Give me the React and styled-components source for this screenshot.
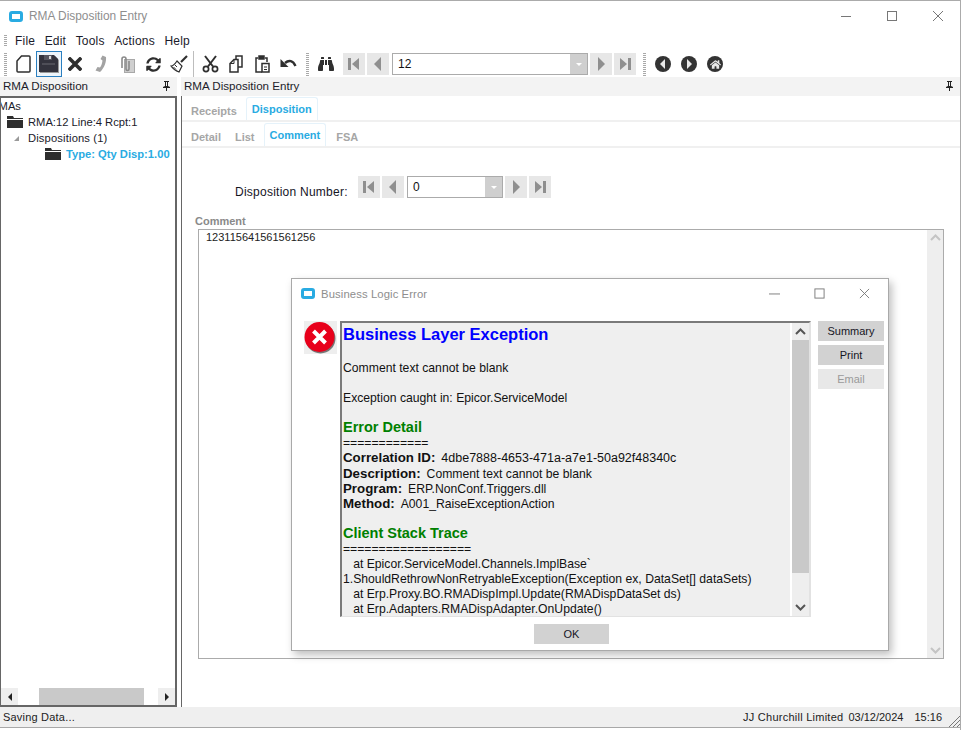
import React from 'react';
import styled, { createGlobalStyle } from 'styled-components';
import { FaBinoculars, FaHome, FaSyncAlt } from 'react-icons/fa';

const GlobalStyle = createGlobalStyle`
  html, body { margin: 0; padding: 0; background: #fff; }
  body { font-family: "Liberation Sans", Arial, sans-serif; font-size: 12px; color: #111; }
`;

const blue = '#29abe2';

const Window = styled.div`
  position: relative;
  width: 961px;
  height: 730px;
  box-sizing: border-box;
  border-top: 1px solid #ababab;
  border-right: 1px solid #ababab;
  overflow: hidden;
  display: flex;
  flex-direction: column;
  background: #fff;
`;

// bits of the desktop showing through at the very edge of the window
const EdgeStrip = styled.span`
  position: absolute;
  right: -1px;
  top: ${p => p.$top}px;
  width: 1px;
  height: ${p => p.$h}px;
  background: ${p => p.$color};
`;

const TitleBar = styled.div`
  height: 30px;
  flex: none;
  display: flex;
  align-items: center;
  padding-left: 9px;
  color: #8e8e8e;
  font-size: 11.9px;
`;

const AppIcon = styled.span`
  width: 14px;
  height: 11px;
  box-sizing: border-box;
  border-radius: 3px;
  background: #fff;
  border: 3px solid ${blue};
  margin-right: 6px;
  flex: none;
`;

const TitleText = styled.span`
  flex: 1;
`;

const WinButtons = styled.div`
  display: flex;
  align-items: center;
  color: #777;
`;

const WinButton = styled.svg`
  display: block;
  width: ${p => p.$size || 12}px;
  height: ${p => p.$size || 12}px;
  margin-left: ${p => p.$gap || 0}px;
  margin-right: ${p => p.$right || 0}px;
  fill: none;
  stroke: #777;
  stroke-width: 1;
`;

const MenuBar = styled.div`
  height: 20px;
  flex: none;
  display: flex;
  align-items: center;
  padding-left: 4px;
`;

const Grip = styled.span`
  width: 3px;
  height: ${p => p.$h || 23}px;
  flex: none;
  margin-left: ${p => p.$gap || 0}px;
  background: repeating-linear-gradient(to bottom, #a9a9a9 0 1px, #fff 1px 2px);
`;

const MenuItem = styled.span`
  margin-left: ${p => p.$gap || 9.5}px;
  font-size: 12px;
  letter-spacing: 0.2px;
  color: #1b1b2b;
`;

const ToolBar = styled.div`
  height: 26px;
  flex: none;
  display: flex;
  align-items: center;
  padding-left: 4px;
`;

const ToolSlot = styled.span`
  width: 26px;
  height: 26px;
  box-sizing: border-box;
  flex: none;
  display: flex;
  align-items: center;
  justify-content: center;
  color: #2f2f2f;
  margin-left: ${p => p.$gap || 0}px;
  border: ${p => (p.$active ? `1px solid #2a7fc0` : 'none')};
  background: ${p => (p.$active ? '#eef5fb' : 'transparent')};
`;

const Divider = styled.span`
  width: 1px;
  height: 26px;
  background: #bdbdbd;
  flex: none;
  margin: 0 0 0 1px;
`;

const NavButton = styled.span`
  width: 22px;
  height: 22px;
  flex: none;
  background: #e7e7e7;
  display: flex;
  align-items: center;
  justify-content: center;
  margin-left: ${p => p.$gap ?? 2}px;
`;

const NavGlyph = styled.svg`
  width: 14px;
  height: 14px;
  fill: #8f8f8f;
  display: block;
`;

const Combo = styled.div`
  width: ${p => p.$w}px;
  height: 22px;
  flex: none;
  box-sizing: border-box;
  border: 1px solid #ababab;
  margin: 0 0 0 3px;
  display: flex;
  background: #fff;
`;

const ComboValue = styled.span`
  flex: 1;
  padding-left: 5px;
  line-height: 21px;
  color: #111;
  font-size: 12px;
`;

const ComboDrop = styled.span`
  width: 17px;
  background: #cfcfcf;
  display: flex;
  align-items: center;
  justify-content: center;
  &::after {
    content: '';
    border-left: 3px solid transparent;
    border-right: 3px solid transparent;
    border-top: 3px solid #fff;
  }
`;

const RoundButton = styled.span`
  width: 16px;
  height: 16px;
  flex: none;
  border-radius: 50%;
  background: #333;
  display: flex;
  align-items: center;
  justify-content: center;
  margin-left: ${p => p.$gap || 10}px;
  color: #e8e8e8;
`;

const Body = styled.div`
  flex: 1;
  min-height: 0;
  display: flex;
  background: #fff;
`;

const LeftPanel = styled.div`
  width: 177px;
  flex: none;
  display: flex;
  flex-direction: column;
  margin-right: 4px;
`;

const PanelHeader = styled.div`
  height: 19px;
  flex: none;
  box-sizing: border-box;
  background: #f3f3f3;
  display: flex;
  align-items: center;
  justify-content: space-between;
  padding: 0 6px 2px 3px;
  font-size: 11.6px;
  color: #1c1c2a;
`;

const Pin = styled.svg`
  width: 9px;
  height: 10px;
  display: block;
  fill: #222;
`;

const TreeBox = styled.div`
  flex: 1;
  min-height: 0;
  box-sizing: border-box;
  border: 2px solid #666;
  border-left-width: 1px;
  display: flex;
  flex-direction: column;
  overflow: hidden;
`;

const Tree = styled.div`
  flex: 1;
`;

const TreeRow = styled.div`
  height: 16px;
  display: flex;
  align-items: center;
  padding-left: ${p => p.$indent}px;
  color: ${p => (p.$selected ? blue : '#1a1a2a')};
  font-weight: ${p => (p.$selected ? 700 : 400)};
  font-size: 11.2px;
  letter-spacing: ${p => p.$spacing || 0}px;
  white-space: nowrap;
`;

// the tree is scrolled a little to the right, so its root label runs under the edge
const RootLabel = styled.span`
  margin-left: -10.5px;
`;

const Folder = styled.svg`
  width: 16px;
  height: 12px;
  margin-right: 5px;
  fill: #2e2e2e;
  flex: none;
`;

const Expander = styled.span`
  width: 0;
  height: 0;
  margin-right: 9px;
  margin-left: -14px;
  border-left: 5px solid transparent;
  border-bottom: 5px solid #9a9a9a;
`;

const HScroll = styled.div`
  height: 17px;
  flex: none;
  display: flex;
  align-items: center;
`;

const ScrollEnd = styled.span`
  width: 17px;
  height: 17px;
  background: #eee;
  display: flex;
  align-items: center;
  justify-content: center;
`;

const ScrollArrow = styled.span`
  width: 0;
  height: 0;
  border-top: 4px solid transparent;
  border-bottom: 4px solid transparent;
  ${p => (p.$right ? 'border-left: 4px solid #222;' : 'border-right: 4px solid #222;')}
`;

const ScrollThumb = styled.span`
  width: 105px;
  height: 17px;
  background: #c9c9c9;
  margin: 0 auto 0 21px;
`;

const RightPanel = styled.div`
  flex: 1;
  min-width: 0;
  display: flex;
  flex-direction: column;
`;

const RightBox = styled.div`
  flex: 1;
  min-height: 0;
  border-left: 1px solid #666;
  display: flex;
  flex-direction: column;
`;

const TabRow = styled.div`
  height: 24px;
  flex: none;
  display: flex;
  align-items: flex-end;
  border-bottom: 2px solid #f0f0f0;
  padding-left: ${p => p.$left || 0}px;
`;

const Tab = styled.span`
  height: ${p => (p.$active ? 23 : 20)}px;
  box-sizing: border-box;
  display: flex;
  align-items: ${p => (p.$active ? 'flex-start' : 'center')};
  padding: ${p => (p.$active ? '5px 5px 0' : '2px 0 0')};
  margin-left: ${p => p.$gap || 0}px;
  font-weight: 700;
  font-size: 11px;
  color: ${p => (p.$active ? blue : '#a6a6a6')};
  border: ${p => (p.$active ? '1px solid #e5f2fa' : 'none')};
  border-bottom: none;
  border-radius: 3px 3px 0 0;
`;

const Form = styled.div`
  flex: 1;
  min-height: 0;
  display: flex;
  flex-direction: column;
  padding: 28px 0 48px 13px;
`;

const NumberRow = styled.div`
  height: 22px;
  flex: none;
  display: flex;
  align-items: center;
  padding-left: 40px;
`;

const NumberLabel = styled.span`
  width: 121px;
  padding-top: 9px;
  font-size: 12px;
  color: #15151f;
  letter-spacing: 0.25px;
`;

const CommentLabel = styled.div`
  margin-top: 16px;
  height: 15px;
  line-height: 15px;
  font-weight: 700;
  font-size: 11px;
  color: #8a8a8a;
`;

const CommentBox = styled.div`
  flex: 1;
  min-height: 0;
  margin: 0 16px 0 3px;
  box-sizing: border-box;
  border: 1px solid #ababab;
  display: flex;
`;

const CommentText = styled.div`
  flex: 1;
  padding: 1px 7px;
  font-size: 11px;
  line-height: 13px;
  color: #222;
`;

const VScroll = styled.div`
  width: 16px;
  flex: none;
  background: #eee;
  display: flex;
  flex-direction: column;
  align-items: center;
  justify-content: space-between;
  padding: 3px 0;
  box-sizing: border-box;
`;

const Chevron = styled.svg`
  width: 11px;
  height: 9px;
  fill: none;
  stroke: ${p => p.$color || '#c4c4c4'};
  stroke-width: 2;
  display: block;
`;

const StatusBar = styled.div`
  height: 20px;
  flex: none;
  box-sizing: border-box;
  background: #efefef;
  display: flex;
  align-items: center;
  padding: 0 18px 0 3px;
  font-size: 11px;
  color: #222;
  position: relative;
  margin-bottom: 3px;
  box-shadow: 0 1px 0 #a8a8a8;
`;

const StatusText = styled.span`
  margin-left: ${p => p.$gap || 0}px;
  letter-spacing: ${p => p.$spacing || 0}px;
`;

const StatusLead = styled.span`
  margin-right: auto;
  letter-spacing: 0.2px;
`;

const ResizeGrip = styled.svg`
  position: absolute;
  right: 0;
  bottom: 0;
  width: 11px;
  height: 11px;
  stroke: #777;
  stroke-width: 1;
`;

const Dialog = styled.div`
  position: absolute;
  left: 291px;
  top: 277px;
  width: 598px;
  height: 373px;
  box-sizing: border-box;
  background: #fff;
  border: 1px solid #a9a9a9;
  box-shadow: 3px 4px 8px rgba(0, 0, 0, 0.25);
  display: flex;
  flex-direction: column;
`;

const DialogTitle = styled(TitleBar)`
  height: 29px;
  font-size: 11.3px;
  padding-left: 9px;
  margin-bottom: 2px;
  letter-spacing: 0.1px;
`;

const DialogBody = styled.div`
  height: 296px;
  margin-top: 11px;
  flex: none;
  display: flex;
  padding-left: 12px;
`;

const ErrorIcon = styled.svg`
  width: 33px;
  height: 33px;
  flex: none;
  margin-right: 3px;
`;

const MessagePane = styled.div`
  width: 471px;
  flex: none;
  box-sizing: border-box;
  display: flex;
  background: #efefef;
  border-top: 2px solid #7a7a7a;
  border-left: 2px solid #7a7a7a;
  border-bottom: 1px solid #e2e2e2;
  border-right: 2px solid #e2e2e2;
  overflow: hidden;
`;

const Message = styled.div`
  flex: 1;
  min-width: 0;
  padding: 0 0 0 1px;
  font-size: 12.2px;
  line-height: 15.3px;
  color: #111;
  overflow: hidden;
`;

const Heading = styled.div`
  font-size: 16.5px;
  line-height: 22px;
  font-weight: 700;
  color: #0000ff;
`;

const SubHeading = styled.div`
  font-size: 14.5px;
  line-height: 18px;
  font-weight: 700;
  color: #008000;
  margin-top: ${p => p.$top}px;
`;

const Para = styled.div`
  margin-top: ${p => p.$top || 0}px;
  white-space: nowrap;
`;

const Label = styled.b`
  font-size: 13.3px;
  line-height: 1;
  margin-right: 6px;
`;

const HexValue = styled.span`
  font-size: 12.5px;
  line-height: 1;
`;

const StackTrace = styled.div`
  line-height: 15px;
`;

const PaneScroll = styled.div`
  width: 17px;
  flex: none;
  border-left: 2px solid #fff;
  display: flex;
  flex-direction: column;
  background: #eee;
`;

const PaneArrow = styled.div`
  height: 17px;
  flex: none;
  display: flex;
  align-items: center;
  justify-content: center;
`;

const PaneThumb = styled.div`
  height: 233px;
  flex: none;
  background: #c9c9c9;
`;

const PaneRest = styled.div`
  flex: 1;
`;

const SideButtons = styled.div`
  display: flex;
  flex-direction: column;
  gap: 4px;
  margin-left: 7px;
`;

const Button = styled.span`
  width: ${p => p.$w || 66}px;
  height: 20px;
  display: flex;
  align-items: center;
  justify-content: center;
  font-size: 11px;
  background: ${p => (p.$disabled ? '#e8e8e8' : '#d2d2d2')};
  color: ${p => (p.$disabled ? '#9a9a9a' : '#15151f')};
`;

const DialogFooter = styled.div`
  display: flex;
  justify-content: center;
  padding: 7px 0 0 0;
  margin-left: -37px;
`;

const First = () => <NavGlyph viewBox="0 0 14 14"><rect x="1" y="1" width="3" height="12" /><path d="M12 1v12L5 7z" /></NavGlyph>;
const Prev = () => <NavGlyph viewBox="0 0 14 14"><path d="M10 0v14L3 7z" /></NavGlyph>;
const Next = () => <NavGlyph viewBox="0 0 14 14"><path d="M4 0v14l7-7z" /></NavGlyph>;
const Last = () => <NavGlyph viewBox="0 0 14 14"><path d="M2 1v12l7-6z" /><rect x="10" y="1" width="3" height="12" /></NavGlyph>;

const Up = ({ color }) => <Chevron $color={color} viewBox="0 0 11 9"><path d="M1 7l4.500-4.500L10 7" /></Chevron>;
const Down = ({ color }) => <Chevron $color={color} viewBox="0 0 11 9"><path d="M1 2l4.500 4.500L10 2" /></Chevron>;

const FolderIcon = () => <Folder viewBox="0 0 16 12"><path d="M0 0h6l1 2h9v1H0zM0 4h16v8H0z" /></Folder>;

const PinIcon = () => <Pin viewBox="0 0 9 10"><path d="M2 0h5v1H6v4l2 1v1H5v3H4V7H1V6l2-1V1H2zM4 1v4h1V1z" /></Pin>;

const NewIcon = () => (
  <svg width="15" height="18" viewBox="0 0 15 18" fill="none" stroke="#2f2f2f" strokeWidth="1.5">
    <path d="M5.500 1H13a1 1 0 011 1v14a1 1 0 01-1 1H2a1 1 0 01-1-1V6z" />
  </svg>
);

const SaveIcon = () => (
  <svg width="22" height="20" viewBox="0 0 22 20">
    <path d="M2 2h15l4 4v13H2z" fill="#9a9a9a" />
    <path d="M1 1h15l4 4v13H1z" fill="#33333d" />
    <path d="M6 1h8v5H6z" fill="#55555f" />
    <path d="M11 2h2v3h-2z" fill="#d8d8d8" />
    <path d="M4 10h13" stroke="#6a6a72" strokeWidth="1" />
  </svg>
);

const CloseIcon = () => (
  <svg width="14" height="14" viewBox="0 0 14 14" stroke="#2f2f2f" strokeWidth="3.600" strokeLinecap="square">
    <path d="M2 2l10 10M12 2L2 12" />
  </svg>
);

const PhoneIcon = () => (
  <svg width="12" height="18" viewBox="0 0 12 18" fill="#a3a3a3">
    <path d="M7.500 0.500l3.500 1.500c0.500 4.500-1.500 11-6 15l-4.500-1.500 2-3.500 2.500 0.500c1.500-2 2.200-4.500 2.500-7L5.500 4z" />
  </svg>
);

const AttachIcon = () => (
  <svg width="16" height="17" viewBox="0 0 16 17" fill="none">
    <rect x="5.500" y="3.500" width="10" height="13" fill="#cfcfcf" stroke="#a8a8a8" />
    <path d="M3 12V3a2 2 0 014 0v10a1.500 1.500 0 003 0V5" stroke="#8a8a8a" strokeWidth="1.600" />
  </svg>
);

const BroomIcon = () => (
  <svg width="18" height="18" viewBox="0 0 18 18" fill="none" stroke="#2f2f2f">
    <path d="M17 1l-6 6" strokeWidth="2.200" />
    <path d="M7 6l5 5-3 6C6 16 3 14 1 11c2 0 4-2 6-5z" fill="#fff" strokeWidth="1.200" />
    <path d="M5 10l2 2M3.500 12l2.500 2.500" strokeWidth="1" />
  </svg>
);

const CutIcon = () => (
  <svg width="17" height="18" viewBox="0 0 17 18" fill="none" stroke="#2f2f2f">
    <path d="M3 1l8 10.500M14 1L6 11.500" strokeWidth="2" />
    <circle cx="4" cy="14" r="2.600" strokeWidth="1.700" />
    <circle cx="13" cy="14" r="2.600" strokeWidth="1.700" />
  </svg>
);

const CopyIcon = () => (
  <svg width="14" height="18" viewBox="0 0 14 18" fill="none" stroke="#2f2f2f" strokeWidth="1.5">
    <path d="M7 4V1h6v11h-4" />
    <path d="M5 4.500L1 8.500V17h8V4.500H5z" />
    <path d="M5 4.500v4H1" strokeWidth="1" />
  </svg>
);

const PasteIcon = () => (
  <svg width="15" height="18" viewBox="0 0 15 18" fill="none" stroke="#2f2f2f" strokeWidth="1.500">
    <path d="M3 3H1v14h6" />
    <path d="M10 3h2v4" />
    <rect x="4" y="1" width="5" height="3" fill="#2f2f2f" />
    <path d="M7 8.500h7v8.500H7z" fill="#fff" />
    <path d="M9 12h3M9 14.500h3" strokeWidth="1" />
  </svg>
);

const UndoIcon = () => (
  <svg width="17" height="14" viewBox="0 0 17 14" fill="none">
    <path d="M5 6c4-3.500 8-2.500 10.500 3" stroke="#2f2f2f" strokeWidth="2.400" />
    <path d="M0.500 2v8h8z" fill="#2f2f2f" />
  </svg>
);

function Nav({ value, width, gap }) {
  return (
    <>
      <NavButton $gap={gap}><First /></NavButton>
      <NavButton><Prev /></NavButton>
      <Combo $w={width}><ComboValue>{value}</ComboValue><ComboDrop /></Combo>
      <NavButton><Next /></NavButton>
      <NavButton><Last /></NavButton>
    </>
  );
}

function App() {
  return (
    <Window>
      <GlobalStyle />
      <TitleBar>
        <AppIcon />
        <TitleText>RMA Disposition Entry</TitleText>
        <WinButtons>
          <WinButton viewBox="0 0 12 12"><path d="M1 6.500h10" /></WinButton>
          <WinButton $gap={34} viewBox="0 0 12 12"><rect x="1.500" y="1.500" width="9" height="9" /></WinButton>
          <WinButton $gap={34} $right={16} viewBox="0 0 12 12"><path d="M1 1l10 10M11 1L1 11" /></WinButton>
        </WinButtons>
      </TitleBar>

      <MenuBar>
        <Grip $h={12} />
        <MenuItem $gap={8}>File</MenuItem>
        <MenuItem>Edit</MenuItem>
        <MenuItem>Tools</MenuItem>
        <MenuItem>Actions</MenuItem>
        <MenuItem>Help</MenuItem>
      </MenuBar>

      <ToolBar>
        <Grip />
        <ToolSlot $gap={3}><NewIcon /></ToolSlot>
        <ToolSlot $active><SaveIcon /></ToolSlot>
        <ToolSlot><CloseIcon /></ToolSlot>
        <ToolSlot><PhoneIcon /></ToolSlot>
        <ToolSlot><AttachIcon /></ToolSlot>
        <ToolSlot><FaSyncAlt size={15} /></ToolSlot>
        <ToolSlot><BroomIcon /></ToolSlot>
        <Divider />
        <ToolSlot $gap={3}><CutIcon /></ToolSlot>
        <ToolSlot><CopyIcon /></ToolSlot>
        <ToolSlot><PasteIcon /></ToolSlot>
        <ToolSlot><UndoIcon /></ToolSlot>
        <Grip $gap={5} />
        <ToolSlot $gap={4}><FaBinoculars size={16} /></ToolSlot>
        <Nav value="12" width={196} gap={4} />
        <Grip $gap={7} />
        <RoundButton $gap={9}><svg width="10" height="10" viewBox="0 0 10 10" fill="#e8e8e8"><path d="M7 0v10L2 5z" /></svg></RoundButton>
        <RoundButton><svg width="10" height="10" viewBox="0 0 10 10" fill="#e8e8e8"><path d="M3 0v10l5-5z" /></svg></RoundButton>
        <RoundButton><FaHome size={11} /></RoundButton>
      </ToolBar>

      <Body>
        <LeftPanel>
          <PanelHeader>RMA Disposition<PinIcon /></PanelHeader>
          <TreeBox>
            <Tree>
              <TreeRow $indent={0}><RootLabel>RMAs</RootLabel></TreeRow>
              <TreeRow $indent={6}><FolderIcon />RMA:12 Line:4 Rcpt:1</TreeRow>
              <TreeRow $indent={27} $spacing={0.15}><Expander />Dispositions (1)</TreeRow>
              <TreeRow $indent={44} $selected><FolderIcon />Type: Qty Disp:1.00</TreeRow>
            </Tree>
            <HScroll>
              <ScrollEnd><ScrollArrow /></ScrollEnd>
              <ScrollThumb />
              <ScrollEnd><ScrollArrow $right /></ScrollEnd>
            </HScroll>
          </TreeBox>
        </LeftPanel>

        <RightPanel>
          <PanelHeader>RMA Disposition Entry<PinIcon /></PanelHeader>
          <RightBox>
            <TabRow $left={9}>
              <Tab>Receipts</Tab>
              <Tab $active $gap={9}>Disposition</Tab>
            </TabRow>
            <TabRow $left={9}>
              <Tab>Detail</Tab>
              <Tab $gap={14}>List</Tab>
              <Tab $active $gap={9}>Comment</Tab>
              <Tab $gap={10}>FSA</Tab>
            </TabRow>
            <Form>
              <NumberRow>
                <NumberLabel>Disposition Number:</NumberLabel>
                <Nav value="0" width={96} gap={2} />
              </NumberRow>
              <CommentLabel>Comment</CommentLabel>
              <CommentBox>
                <CommentText>123115641561561256</CommentText>
                <VScroll><Up /><Down /></VScroll>
              </CommentBox>
            </Form>
          </RightBox>
        </RightPanel>
      </Body>

      <StatusBar>
        <StatusLead>Saving Data...</StatusLead>
        <StatusText $spacing={0.25}>JJ Churchill Limited</StatusText>
        <StatusText $gap={5}>03/12/2024</StatusText>
        <StatusText $gap={11}>15:16</StatusText>
        <ResizeGrip viewBox="0 0 11 11"><path d="M0 11L11 0M4 11l7-7M8 11l3-3" /></ResizeGrip>
      </StatusBar>

      <Dialog>
        <DialogTitle>
          <AppIcon />
          <TitleText>Business Logic Error</TitleText>
          <WinButtons>
            <WinButton $size={11} viewBox="0 0 12 12"><path d="M0 6.500h12" /></WinButton>
            <WinButton $size={11} $gap={34} viewBox="0 0 12 12"><rect x="1" y="1" width="10" height="10" /></WinButton>
            <WinButton $size={11} $gap={34} $right={18} viewBox="0 0 12 12"><path d="M1 1l10 10M11 1L1 11" /></WinButton>
          </WinButtons>
        </DialogTitle>
        <DialogBody>
          <ErrorIcon viewBox="0 0 33 33">
            <rect width="33" height="33" fill="#eee" />
            <circle cx="16.500" cy="17.500" r="15" fill="#777" />
            <circle cx="15.500" cy="16" r="15" fill="#e8001b" />
            <path d="M9.500 10l12 12M21.500 10l-12 12" stroke="#fff" strokeWidth="4" />
          </ErrorIcon>
          <MessagePane>
            <Message>
              <Heading>Business Layer Exception</Heading>
              <Para $top={16}>Comment text cannot be blank</Para>
              <Para $top={15}>Exception caught in: Epicor.ServiceModel</Para>
              <SubHeading $top={11}>Error Detail</SubHeading>
              <Para $top={0.4}>============</Para>
              <Para><Label>Correlation ID:</Label><HexValue>4dbe7888-4653-471a-a7e1-50a92f48340c</HexValue></Para>
              <Para><Label>Description:</Label>Comment text cannot be blank</Para>
              <Para><Label>Program:</Label>ERP.NonConf.Triggers.dll</Para>
              <Para><Label>Method:</Label>A001_RaiseExceptionAction</Para>
              <SubHeading $top={11.6}>Client Stack Trace</SubHeading>
              <StackTrace>
                <Para>==================</Para>
                <Para>&nbsp;&nbsp; at Epicor.ServiceModel.Channels.ImplBase`</Para>
                <Para>1.ShouldRethrowNonRetryableException(Exception ex, DataSet[] dataSets)</Para>
                <Para>&nbsp;&nbsp; at Erp.Proxy.BO.RMADispImpl.Update(RMADispDataSet ds)</Para>
                <Para>&nbsp;&nbsp; at Erp.Adapters.RMADispAdapter.OnUpdate()</Para>
              </StackTrace>
            </Message>
            <PaneScroll>
              <PaneArrow><Up color="#555" /></PaneArrow>
              <PaneThumb />
              <PaneRest />
              <PaneArrow><Down color="#555" /></PaneArrow>
            </PaneScroll>
          </MessagePane>
          <SideButtons>
            <Button>Summary</Button>
            <Button>Print</Button>
            <Button $disabled>Email</Button>
          </SideButtons>
        </DialogBody>
        <DialogFooter><Button $w={75}>OK</Button></DialogFooter>
      </Dialog>

      <EdgeStrip $top={140} $h={103} $color="#7a9a60" />
      <EdgeStrip $top={360} $h={105} $color="#2a7ab0" />
    </Window>
  );
}

export default App;
